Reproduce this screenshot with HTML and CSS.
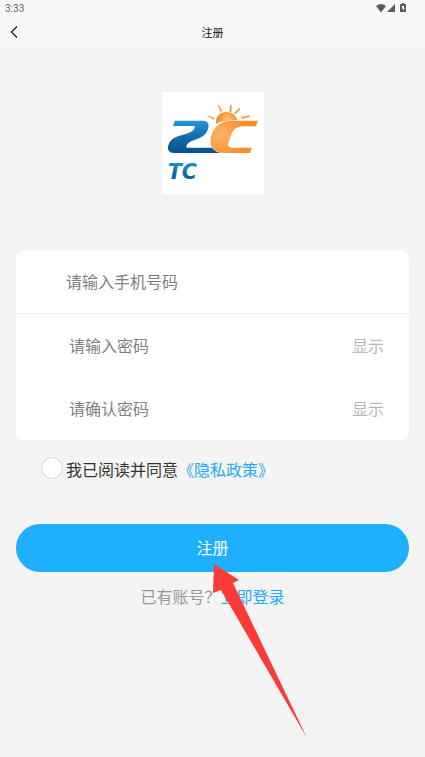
FILE: index.html
```html
<!DOCTYPE html>
<html lang="zh-CN">
<head>
<meta charset="utf-8">
<meta name="viewport" content="width=device-width, initial-scale=1">
<title>注册</title>
<link rel="stylesheet" href="styles.css">
</head>
<body>
<header class="top">
  <div class="status">
    <span>3:33</span>
    <svg class="status-icons" width="32" height="10" viewBox="0 0 32 10" fill="#5c5c5c" aria-hidden="true">
      <path d="M0 3Q5-1 10 3L5 9.500Z"/>
      <path d="M19 1V9H11Z"/>
      <path d="M24 1H26V0H28V1H30V9H24Z"/>
      <path d="M26 3H28V5H28.500L27 8V5.500H26Z" fill="#f8f8f8"/>
    </svg>
  </div>
  <nav class="titlebar">
    <button class="back" type="button" aria-label="返回">
      <svg width="8" height="12" viewBox="0 0 8 12" fill="none" stroke="#111" stroke-width="1.200"><path d="M7 .5L1.500 6L7 11.500"/></svg>
    </button>
    <h1 class="title">注册</h1>
  </nav>
</header>
<main class="page">
  <svg class="logo" viewBox="21 21 306 306" role="img" aria-label="2C TC">
    <defs>
      <linearGradient id="blue" x1="0" y1="0" x2="0" y2="1"><stop offset="0" stop-color="#2499d1"/><stop offset=".5" stop-color="#116ead"/><stop offset="1" stop-color="#07518f"/></linearGradient>
      <radialGradient id="orange" gradientUnits="userSpaceOnUse" cx="200" cy="150" r="70"><stop offset="0" stop-color="#ffb56a"/><stop offset="1" stop-color="#fa8f28"/></radialGradient>
      <radialGradient id="sun" gradientUnits="userSpaceOnUse" cx="218" cy="104" r="32"><stop offset="0" stop-color="#ffc07c"/><stop offset="1" stop-color="#f6892a"/></radialGradient>
    </defs>
    <rect x="21" y="21" width="306" height="306" fill="#fff"/>
    <path d="M183 116C181 94 196 81 214 81C232 81 244 91 246 105L226 107C208 107 196 109 183 116Z" fill="url(#sun)"/>
    <g fill="#f39a43">
      <path d="M187 59L192 61L202 79L198 82Z"/><path d="M225 61L230 61L229 81L223 81Z"/><path d="M254 68L256 72L242 88L237 84Z"/>
      <path d="M155 92L161 92L179 99L177 104Z"/><path d="M284 91V96L260 101L258 96Z"/>
    </g>
    <path d="M60 107H143C157 107 163 115 160 128C156 145 147 154 126 162L108 169C99 173 94 179 94 188H171C177 197 189 203 207 204H57C43 204 36 195 40 181C44 166 54 158 74 152L98 145C109 141 117 135 119 128C120 124 118 123 112 123H54Z" fill="url(#blue)"/>
    <path d="M309 107L303 124H266C247 124 235 132 229 149L221 171C217 183 221 188 232 188H291L285 204H212C181 204 164 188 167 163C170 133 192 108 225 107Z" fill="url(#orange)" stroke="#fff" stroke-width="2" paint-order="stroke"/>
    <text class="logo-text" x="38" y="282" fill="url(#blue)">TC</text>
  </svg>
  <form class="form">
    <div class="card">
      <div class="row">
        <input class="field" type="tel" aria-label="手机号码" placeholder="请输入手机号码">
      </div>
      <div class="row row-password">
        <input class="field" type="password" aria-label="密码" placeholder="请输入密码">
        <button class="show" type="button">显示</button>
      </div>
      <div class="row row-password">
        <input class="field" type="password" aria-label="确认密码" placeholder="请确认密码">
        <button class="show" type="button">显示</button>
      </div>
    </div>
    <div class="agree">
      <input class="check" type="checkbox" id="agree">
      <p class="agree-text"><label for="agree">我已阅读并同意</label><a class="link" href="#privacy">《隐私政策》</a></p>
    </div>
    <div class="action">
      <button class="submit" type="submit">注册</button>
      <svg class="pointer" width="94" height="174" viewBox="0 0 94 174" aria-hidden="true"><path d="M1 0L26 16L20 19L94 174L8 26L0 29Z" fill="#fc3b39"/></svg>
    </div>
    <p class="login">已有账号？<a class="link" href="#login">立即登录</a></p>
  </form>
</main>
</body>
</html>
```
FILE: styles.css
```css
* { box-sizing: border-box; }

body {
  margin: 0;
  min-height: 100vh;
  background: #f4f4f4;
  color: #333;
  font-family: "Noto Sans CJK SC", sans-serif;
  font-size: 16px;
  line-height: 24px;
}

button, input { font: inherit; }

button {
  padding: 0;
  border: 0;
  background: none;
  cursor: pointer;
}

.top { background: #f8f8f8; }

.status {
  display: flex;
  align-items: center;
  justify-content: space-between;
  height: 16px;
  padding: 2px 17px 0 5px;
  color: #666;
  font-family: Roboto, sans-serif;
  font-size: 10px;
  line-height: 16px;
}

.status-icons { margin-bottom: 2px; }

.titlebar {
  display: grid;
  grid-template-columns: 32px 1fr 32px;
  align-items: center;
  height: 31px;
}

.back {
  display: flex;
  align-items: center;
  height: 31px;
  padding-left: 10px;
}

.title {
  margin: 0;
  color: #111;
  font-size: 11px;
  font-weight: 400;
  line-height: 30px;
  text-align: center;
}

.page { padding: 45px 16px 0; }

.logo {
  display: block;
  width: 102px;
  height: 102px;
  margin: 0 auto 56px;
}

.logo-text {
  font-family: "DejaVu Sans", sans-serif;
  font-size: 62px;
  font-style: italic;
  font-weight: 700;
}

.card {
  border-radius: 9px;
  background: #fff;
}

.row {
  display: flex;
  align-items: center;
  height: 63px;
  padding: 0 25px 2px 50px;
}

.row-password {
  padding-left: 53px;
  border-top: 1px solid #fcfcfc;
}

.row:first-child + .row {
  height: 64px;
  border-color: #f0f0f0;
}

.field {
  flex: 1;
  min-width: 0;
  height: 40px;
  padding: 0;
  border: 0;
  outline: 0;
  background: none;
  color: #333;
}

.field::placeholder { color: #808080; opacity: 1; }

.show { color: #b8b8b8; }

.agree {
  display: flex;
  align-items: flex-start;
  gap: 3px;
  padding: 17px 0 0 25px;
}

.check {
  flex: none;
  width: 22px;
  height: 22px;
  margin: 0;
  border: 1px solid #d6d6d6;
  border-radius: 50%;
  background: #fff;
  appearance: none;
}

.check:checked { background: #1eafff; }

.agree-text {
  margin: 0;
}

.link {
  color: #24a9f2;
  text-decoration: none;
}

.action {
  position: relative;
  margin-top: 43px;
}

.submit {
  display: block;
  width: 100%;
  height: 48px;
  padding-bottom: 2px;
  border-radius: 24px;
  background: #1eafff;
  color: #fff;
}

.pointer {
  position: absolute;
  top: 40px;
  left: 50%;
  pointer-events: none;
}

.login {
  margin: 12px 0 0;
  color: #999;
  text-align: center;
}
```
